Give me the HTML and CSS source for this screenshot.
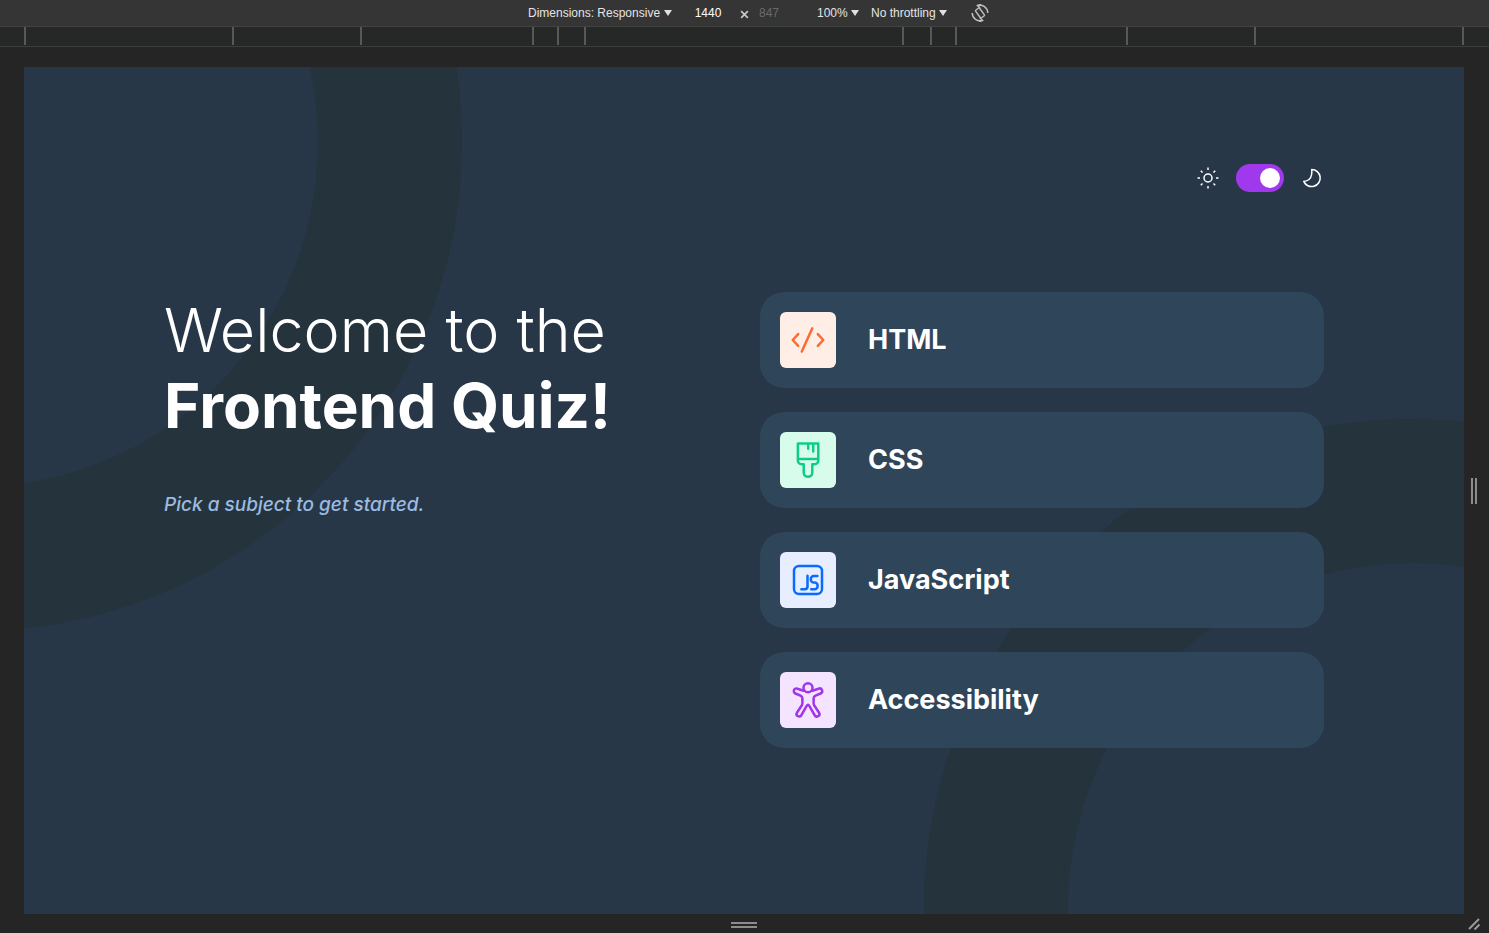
FILE: index.html
```html
<!DOCTYPE html>
<html lang="en">
<head>
<meta charset="utf-8">
<meta name="viewport" content="width=device-width, initial-scale=1">
<title>Frontend Quiz</title>
<link rel="stylesheet" href="styles.css">
</head>
<body>
<div class="toolbar">
  <span class="picker picker-device">
    <select class="picker-select" aria-label="Dimensions"><option>Dimensions: Responsive</option></select>
    <svg class="picker-arrow" viewBox="0 0 8 6" aria-hidden="true"><path d="M0 0h8L4 6z"/></svg>
  </span>
  <span class="size">
    <input class="size-input" type="text" value="1440" aria-label="Width">
    <svg class="size-times" viewBox="0 0 8 8" aria-hidden="true"><path d="M1 1l6 6M7 1L1 7"/></svg>
    <input class="size-input size-auto" type="text" placeholder="847" aria-label="Height">
  </span>
  <span class="picker">
    <select class="picker-select" aria-label="Zoom"><option>100%</option></select>
    <svg class="picker-arrow" viewBox="0 0 8 6" aria-hidden="true"><path d="M0 0h8L4 6z"/></svg>
  </span>
  <span class="picker">
    <select class="picker-select" aria-label="Throttling"><option>No throttling</option></select>
    <svg class="picker-arrow" viewBox="0 0 8 6" aria-hidden="true"><path d="M0 0h8L4 6z"/></svg>
  </span>
  <button class="rotate" type="button" aria-label="Rotate">
    <svg viewBox="0 0 18 18" aria-hidden="true">
      <rect x="6.500" y="4.200" width="5" height="9.600" rx="1" transform="rotate(-36 9 9)"/>
      <path d="M6.500 1.500A8 8 0 0 1 16.800 9M11.500 16.500A8 8 0 0 1 1.200 9"/>
      <path d="M10 .5L6.500 1.500 9 4M8 17.500l3.500-1L9 14"/>
    </svg>
  </button>
</div>

<div class="ruler" aria-hidden="true">
  <i class="mark" style="flex-grow:208"></i><i class="mark" style="flex-grow:128"></i><i class="mark" style="flex-grow:172"></i><i class="mark" style="flex-grow:25"></i><i class="mark" style="flex-grow:27"></i><i class="mark" style="flex-grow:318"></i><i class="mark" style="flex-grow:28"></i><i class="mark" style="flex-grow:25"></i><i class="mark" style="flex-grow:171"></i><i class="mark" style="flex-grow:128"></i><i class="mark" style="flex-grow:210"></i>
</div>

<div class="stage">
  <div class="page">
    <svg class="rings" viewBox="0 0 1440 847" preserveAspectRatio="xMidYMid slice" aria-hidden="true">
      <circle cx="-51" cy="75" r="417"/>
      <circle cx="1389" cy="841" r="417"/>
    </svg>
    <header class="header">
      <svg class="mode-icon" viewBox="0 0 24 24" aria-hidden="true">
        <circle cx="12" cy="12" r="4"/>
        <path d="M12 1.500v2.500M12 20v2.500M1.500 12H4M20 12h2.500M4.800 4.800l1.700 1.700M17.500 17.500l1.700 1.700M4.800 19.200l1.700-1.700M17.500 6.500l1.700-1.700"/>
      </svg>
      <input class="switch" type="checkbox" role="switch" aria-label="Dark mode" checked>
      <svg class="mode-icon" viewBox="0 0 24 24" aria-hidden="true">
        <path d="M11.700 3.400A8.600 8.600 0 1 1 3.700 15.400Q10.600 14.800 11.600 8.500Q12 6 11.700 3.400z"/>
      </svg>
    </header>
    <main class="content">
      <section class="intro">
        <h1 class="title"><span class="title-light">Welcome to the</span> <strong class="title-strong">Frontend Quiz!</strong></h1>
        <p class="hint">Pick a subject to get started.</p>
      </section>
      <nav class="subjects" aria-label="Subjects">
        <button class="subject" type="button">
          <svg class="subject-icon html" viewBox="0 0 56 56" aria-hidden="true">
            <path d="M18.200 22.200l-5.500 5.800 5.500 5.800M37.800 22.200l5.500 5.800-5.500 5.800M32.300 16.300L21.800 39.600"/>
          </svg>
          HTML
        </button>
        <button class="subject" type="button">
          <svg class="subject-icon css" viewBox="0 0 56 56" aria-hidden="true">
            <path d="M17.900 11.400H38.300V28.700a3.500 3.500 0 0 1-3.500 3.500H32.300V40.500a4.300 4.300 0 0 1-8.600 0V32.200H21.400a3.500 3.500 0 0 1-3.500-3.500zM17.900 27H38.300M28.200 11.500v5.200M33.200 11.500v8"/>
          </svg>
          CSS
        </button>
        <button class="subject" type="button">
          <svg class="subject-icon js" viewBox="0 0 56 56" aria-hidden="true">
            <rect x="14" y="14" width="28" height="28" rx="5"/>
            <path d="M27.500 23.700V34.500a2.700 2.700 0 0 1-2.700 2.700H21.400M37.400 23.900H33.800a3 3 0 0 0-3 3v.7a3 3 0 0 0 3 3h.8a3 3 0 0 1 3 3v.6a3 3 0 0 1-3 3H31.200"/>
          </svg>
          JavaScript
        </button>
        <button class="subject" type="button">
          <svg class="subject-icon a11y" viewBox="0 0 56 56" aria-hidden="true">
            <circle cx="28" cy="15.800" r="4.500"/>
            <path d="M23.700 18.700L17.500 16.700A2.600 2.600 0 0 0 15.400 21.500L20.500 23.700Q22.400 24.600 22.400 26.500V31Q22.400 32.300 21.700 33.500L16.900 40.800A2.500 2.500 0 0 0 21.400 43.200L26.700 33.800Q28 31.600 29.300 33.800L34.600 43.200A2.500 2.500 0 0 0 39.100 40.800L34.300 33.500Q33.600 32.300 33.600 31V26.500Q33.600 24.600 35.500 23.700L40.600 21.500A2.600 2.600 0 0 0 38.500 16.700L32.300 18.700"/>
          </svg>
          Accessibility
        </button>
      </nav>
    </main>
  </div>
  <div class="handle handle-right"></div>
  <div class="handle handle-bottom"></div>
  <svg class="handle-corner" viewBox="0 0 12 12" aria-hidden="true"><path d="M1 11L11 1M6.500 11.500l5-5"/></svg>
</div>
</body>
</html>
```

FILE: styles.css
```css
* {
  box-sizing: border-box;
}

body {
  margin: 0;
  min-height: 100vh;
  display: flex;
  flex-direction: column;
  background: #252525;
  color: #fff;
  font-family: Inter, "Liberation Sans", sans-serif;
}

button,
input,
select {
  margin: 0;
  padding: 0;
  border: 0;
  background: none;
  color: inherit;
  font: inherit;
  appearance: none;
}

/* Device toolbar */

.toolbar {
  display: flex;
  align-items: center;
  justify-content: center;
  gap: 12px;
  height: 27px;
  padding-left: 28px;
  border-bottom: 1px solid #404240;
  background: #353535;
  color: #e4e4e4;
  font: 12px/16px "Liberation Sans", Arial, sans-serif;
}

.picker,
.size {
  display: flex;
  align-items: center;
}

.picker {
  gap: 3px;
}

.picker-arrow {
  width: 8px;
  height: 6px;
  fill: #e0e0e0;
}

.size {
  gap: 8px;
}

.size-input {
  width: 48px;
  text-align: center;
  color: #fff;
}

.size-auto {
  width: 36px;
  margin-right: 12px;
  text-align: left;
  padding-left: 2px;
}

.size-input::placeholder {
  color: #6a6a6a;
}

.size-times {
  width: 9px;
  height: 9px;
  margin-top: 3px;
  fill: none;
  stroke: #c8c8c8;
  stroke-width: 1.500;
}

.rotate {
  width: 18px;
  height: 18px;
  margin-left: 12px;
}

.rotate svg {
  display: block;
  fill: none;
  stroke: #bdbdbd;
  stroke-width: 1.500;
}

.ruler {
  display: flex;
  height: 20px;
  padding: 0 25px 1px 24px;
  border-bottom: 1px solid #3b3d3b;
  background: #252826;
}

.mark {
  flex-basis: 0;
  background: linear-gradient(#585858, #585858) left / 2px 100% no-repeat;
}

.mark:last-child {
  background:
    linear-gradient(#585858, #585858) left / 2px 100% no-repeat,
    linear-gradient(#585858, #585858) right / 2px 100% no-repeat;
}

/* Device area */

.stage {
  flex: 1;
  display: grid;
  grid-template: 20px 1fr 19px / 24px 1fr 25px;
}

.page {
  grid-area: 2 / 2;
  position: relative;
  isolation: isolate;
  overflow: hidden;
  padding: 97px 140px 60px;
  background: #273747;
}

.handle {
  place-self: center;
  border: solid #8c8c8c;
}

.handle-right {
  grid-area: 2 / 3;
  width: 6px;
  height: 26px;
  margin-right: 5px;
  border-width: 0 2px;
}

.handle-bottom {
  grid-area: 3 / 2;
  width: 26px;
  height: 6px;
  margin-top: 3px;
  border-width: 2px 0;
}

.handle-corner {
  grid-area: 3 / 3;
  place-self: center;
  width: 12px;
  height: 12px;
  margin-right: 5px;
  fill: none;
  stroke: #9a9a9a;
  stroke-width: 2;
}

/* Quiz page */

.rings {
  position: absolute;
  inset: 0;
  z-index: -1;
  width: 100%;
  height: 100%;
  fill: none;
  stroke: #25333d;
  stroke-width: 144;
}

.header {
  display: flex;
  align-items: center;
  justify-content: flex-end;
  gap: 16px;
}

.mode-icon {
  width: 24px;
  height: 24px;
  fill: none;
  stroke: #fff;
  stroke-width: 1.500;
  stroke-linejoin: round;
}

.switch {
  width: 48px;
  height: 28px;
  padding: 4px;
  border-radius: 14px;
  background: #a038ec;
  cursor: pointer;
}

.switch::before {
  content: "";
  display: block;
  width: 20px;
  height: 20px;
  border-radius: 50%;
  background: #fff;
}

.switch:checked::before {
  margin-left: auto;
}

.content {
  display: grid;
  grid-template-columns: 1fr 1fr;
  gap: 32px;
  margin-top: 100px;
}

.title {
  margin: 0;
  font-size: 62px;
  line-height: 76px;
}

.title-light,
.title-strong {
  display: block;
}

.title-light {
  font-size: 61px;
  font-weight: 340;
}

.title-strong {
  font-weight: 700;
}

.hint {
  margin: 48px 0 0;
  color: #9bbbe0;
  font-size: 19px;
  line-height: 26px;
  font-style: italic;
  font-weight: 500;
}

.subjects {
  display: flex;
  flex-direction: column;
  gap: 24px;
}

.subject {
  display: flex;
  align-items: center;
  gap: 32px;
  padding: 20px;
  border-radius: 24px;
  background: #2f455a;
  font-size: 27px;
  line-height: 36px;
  font-weight: 700;
  text-align: left;
  cursor: pointer;
}

.subject-icon {
  width: 56px;
  height: 56px;
  border-radius: 6px;
  fill: none;
  stroke-width: 2.500;
  stroke-linecap: round;
  stroke-linejoin: round;
}

.html {
  background: #ffeee6;
  stroke: #ff6a2e;
}

.css {
  background: #d8fcec;
  stroke: #0cce86;
}

.js {
  background: #e6eeff;
  stroke: #0a6bff;
}

.a11y {
  background: #f5e4ff;
  stroke: #a035ec;
}

@media (max-width: 1200px) {
  .page {
    padding: 48px 40px;
  }

  .content {
    grid-template-columns: 1fr;
    margin-top: 48px;
  }
}
```
